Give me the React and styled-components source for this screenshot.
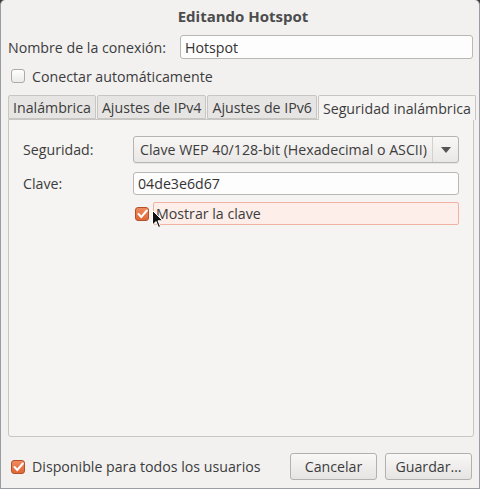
import React from "react";
import styled, { createGlobalStyle } from "styled-components";

const Global = createGlobalStyle`
  html, body { margin: 0; padding: 0; background: #3c3b37; }
  * { box-sizing: border-box; }
`;

const Window = styled.div`
  position: relative;
  width: 480px;
  height: 489px;
  background: #f2f1f0;
  border: 1px solid #9a9da3;
  border-top: none;
  border-radius: 5px 5px 0 0;
  font-family: "Open Sans", "Noto Sans", sans-serif;
  font-size: 14.2px;
  color: #3c3c3c;
  display: flex;
  flex-direction: column;
  padding: 0 6px 0 6px;
`;

const Title = styled.div`
  height: 31px;
  display: flex;
  align-items: center;
  justify-content: center;
  font-weight: 700;
  font-size: 15px;
  color: #4c4c4c;
  padding-left: 6px;
`;

const NameRow = styled.div`
  display: flex;
  align-items: center;
  height: 26px;
  margin-top: 3px;
  padding-left: 1px;
`;

const Label = styled.span`
  width: ${(p) => p.$w}px;
  flex-shrink: 0;
`;

const Entry = styled.div`
  flex: 1;
  height: ${(p) => p.$h || 24}px;
  background: #fdfdfd;
  border: 1px solid #b9b8b5;
  border-radius: 3px;
  display: flex;
  align-items: center;
  padding-left: 4px;
  color: #333;
`;

const CheckRow = styled.div`
  display: flex;
  align-items: center;
  gap: 7px;
  height: 24px;
  margin-top: 4px;
  padding-left: 4px;
`;

const Box = styled.span`
  width: 14px;
  height: 14px;
  flex-shrink: 0;
  border-radius: 3px;
  display: inline-flex;
  align-items: center;
  justify-content: center;
  border: 1px solid ${(p) => (p.$on ? "#b4502a" : "#adaba7")};
  background: ${(p) =>
    p.$on ? "linear-gradient(#ef8a5f, #e06636)" : "linear-gradient(#ffffff, #ecebe9)"};
`;

const Notebook = styled.div`
  margin-top: 7px;
  display: flex;
  flex-direction: column;
  height: 342px;
  padding-left: 1px;
`;

const Tabs = styled.div`
  display: flex;
  align-items: flex-end;
  height: 24px;
  gap: 1px;
`;

const Tab = styled.div`
  height: ${(p) => (p.$active ? 25 : 24)}px;
  padding: 0 4px;
  display: flex;
  align-items: center;
  white-space: nowrap;
  background: ${(p) => (p.$active ? "#f5f4f3" : "#e6e5e3")};
  border: 1px solid #c8c6c3;
  border-bottom: ${(p) => (p.$active ? "none" : "1px solid #c8c6c3")};
  border-radius: 2px 2px 0 0;
  color: #3c3c3c;
  margin-bottom: ${(p) => (p.$active ? "-1px" : "0")};
  position: relative;
  z-index: ${(p) => (p.$active ? 1 : 0)};
`;

const Panel = styled.div`
  flex: 1;
  width: 466px;
  background: #f5f4f3;
  border: 1px solid #c8c6c3;
  border-radius: 0 0 3px 3px;
  padding: 16px 14px 0 14px;
  display: grid;
  grid-template-columns: 110px 326px;
  grid-auto-rows: min-content;
  row-gap: 9px;
  align-items: center;
`;

const Combo = styled.div`
  height: 27px;
  border: 1px solid #b6b4b0;
  border-radius: 3px;
  background: linear-gradient(#f8f7f6, #e9e8e6);
  display: flex;
  align-items: center;
  white-space: nowrap;
  box-shadow: 0 1px 0 rgba(0, 0, 0, 0.05);
`;

const ComboText = styled.span`
  flex: 1;
  padding-left: 6px;
`;

const ComboArrow = styled.span`
  width: 26px;
  height: 100%;
  border-left: 1px solid #d3d1ce;
  display: flex;
  align-items: center;
  justify-content: center;
`;

const ShowRow = styled.div`
  grid-column: 2;
  display: flex;
  align-items: center;
  gap: 4px;
  margin-top: -2px;
  padding-left: 2px;
`;

const Prelight = styled.div`
  flex: 1;
  height: 23px;
  background: #fdeeea;
  border: 1px solid #efb3a3;
  border-radius: 2px;
  display: flex;
  align-items: center;
  padding-left: 2px;
`;

const Footer = styled.div`
  display: flex;
  align-items: center;
  margin-top: 16px;
  padding-left: 4px;
  padding-right: 1px;
`;

const FooterCheck = styled.div`
  display: flex;
  align-items: center;
  gap: 7px;
  flex: 1;
`;

const Button = styled.div`
  width: 87px;
  height: 27px;
  border: 1px solid #b3b1ad;
  border-radius: 3px;
  background: linear-gradient(#f9f8f7, #e5e4e2);
  display: flex;
  align-items: center;
  justify-content: center;
  margin-left: ${(p) => p.$gap || 0}px;
  color: #3c3c3c;
`;

const Cursor = styled.svg`
  position: absolute;
  left: 151px;
  top: 210px;
`;

const Check = () => (
  <svg width="11" height="10" viewBox="0 0 11 10">
    <path d="M1.5 5 L4.3 8 L9.8 1.5" fill="none" stroke="#fff" strokeWidth="2" strokeLinecap="round" />
  </svg>
);

export default function App() {
  return (
    <>
      <Global />
      <Window>
        <Title>Editando Hotspot</Title>
        <NameRow>
          <Label $w={172}>Nombre de la conexión:</Label>
          <Entry>Hotspot</Entry>
        </NameRow>
        <CheckRow>
          <Box />
          <span>Conectar automáticamente</span>
        </CheckRow>
        <Notebook>
          <Tabs>
            <Tab>Inalámbrica</Tab>
            <Tab>Ajustes de IPv4</Tab>
            <Tab>Ajustes de IPv6</Tab>
            <Tab $active>Seguridad inalámbrica</Tab>
          </Tabs>
          <Panel>
            <Label $w={110}>Seguridad:</Label>
            <Combo>
              <ComboText>Clave WEP 40/128-bit (Hexadecimal o ASCII)</ComboText>
              <ComboArrow>
                <svg width="10" height="6" viewBox="0 0 10 6">
                  <path d="M0 0 H10 L5 6 Z" fill="#555" />
                </svg>
              </ComboArrow>
            </Combo>
            <Label $w={110}>Clave:</Label>
            <Entry $h={23}>04de3e6d67</Entry>
            <ShowRow>
              <Box $on>
                <Check />
              </Box>
              <Prelight>Mostrar la clave</Prelight>
            </ShowRow>
          </Panel>
        </Notebook>
        <Footer>
          <FooterCheck>
            <Box $on>
              <Check />
            </Box>
            <span>Disponible para todos los usuarios</span>
          </FooterCheck>
          <Button>Cancelar</Button>
          <Button $gap={8}>Guardar…</Button>
        </Footer>
        <Cursor width="12" height="19" viewBox="0 0 12 19">
          <path d="M0.5 0.5 V15 L4 11.5 L6.5 17.5 L8.5 16.6 L6 10.8 H10.8 Z" fill="#111" stroke="#fff" strokeWidth="1" />
        </Cursor>
      </Window>
    </>
  );
}
